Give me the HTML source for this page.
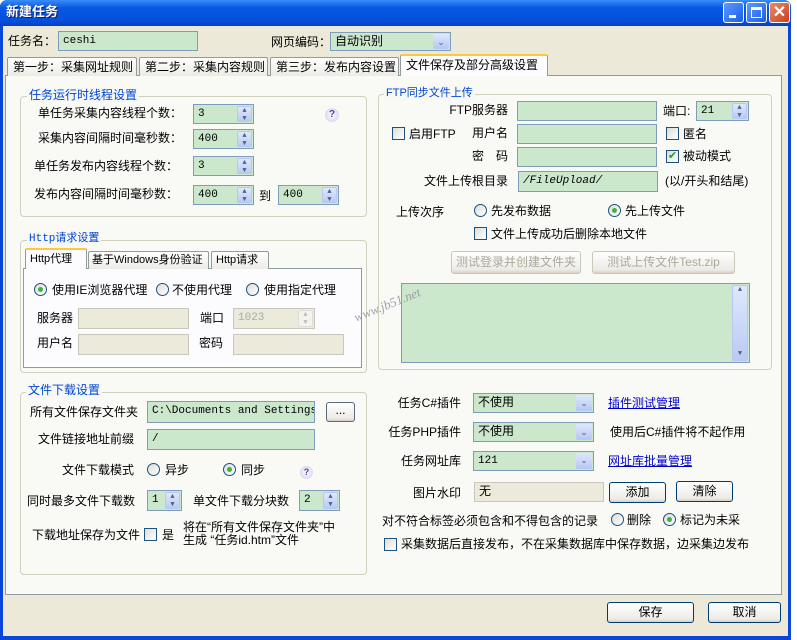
<!DOCTYPE html>
<html><head><meta charset="utf-8"><style>
*{box-sizing:border-box;margin:0;padding:0}
body{width:797px;height:627px;overflow:hidden;background:#fff;font-family:"Liberation Sans","Noto Sans CJK SC",sans-serif;font-size:12px;color:#000;position:relative}
.a{position:absolute;white-space:nowrap;line-height:14px}
.win{position:absolute;left:0;top:0;width:791px;height:640px;background:#0a46d8;border-radius:7px 7px 0 0}
.title{position:absolute;left:0;top:0;width:791px;height:26px;background:linear-gradient(#3a8cf7,#0958e4 30%,#0450dc 80%,#0a3fc0);border-radius:7px 7px 0 0}
.client{position:absolute;left:3px;top:26px;width:785px;height:610px;background:#ece9d8}
.tb{position:absolute;top:2px;width:21px;height:21px;border:1px solid #fff;border-radius:3px;background:linear-gradient(135deg,#5c9aff,#1a5fe6)}
.in{position:absolute;background:#cce8cc;border:1px solid #7f9db9;font-family:"Liberation Mono","Noto Sans CJK SC",monospace;font-size:11px;padding:2px 4px;line-height:14px;white-space:nowrap;overflow:hidden}
.dis{background:#ebeadb;border-color:#c9c7ba;color:#aaa}
.spb{position:absolute;right:1px;top:1px;bottom:1px;width:15px;background:linear-gradient(#dfe7fd,#b9cbf3);border:1px solid #b8c8f0;border-radius:2px;font-size:7px;color:#4d6185;text-align:center;line-height:8px}
.cb{position:absolute;right:1px;top:1px;bottom:1px;width:16px;background:linear-gradient(#dfe7fd,#b4c6f3);border-radius:2px;color:#4d6185;font-size:9px;text-align:center;line-height:16px}
.grp{position:absolute;border:1px solid #d0d0bf;border-radius:4px}
.lg{position:absolute;background:#f7f7f3;color:#0046d5;padding:0 2px;line-height:14px;white-space:nowrap}
.panel{position:absolute;left:5px;top:75px;width:777px;height:520px;background:#f9f9f6;border:1px solid #919b9c}
.tab{position:absolute;top:57px;height:19px;border:1px solid #919b9c;border-bottom:none;background:linear-gradient(#fff,#ecebe5);padding:2px 5px;line-height:14px;white-space:nowrap;border-radius:2px 2px 0 0}
.act{top:54px;height:22px;background:#fcfcfe;border-top:2px solid #ffc83c}
.rd{position:absolute;width:13px;height:13px;border:1px solid #1c5180;border-radius:50%;background:linear-gradient(135deg,#dcdcd7,#fff)}
.rd.on::after{content:"";position:absolute;left:3px;top:3px;width:5px;height:5px;border-radius:50%;background:#3fb33f}
.ck{position:absolute;width:13px;height:13px;border:1px solid #1c5180;background:linear-gradient(135deg,#dcdcd7,#fff)}
.btn{position:absolute;border:1px solid #003c74;border-radius:3px;background:linear-gradient(#fff,#ecebe6 85%,#d6d0c5);text-align:center;line-height:18px}
.bd{border-color:#c9c7ba;color:#aca899}
.lnk{color:#00c;text-decoration:underline}
.r{text-align:right}
</style></head><body>
<div class="win"></div>
<div class="title"></div>
<div class="a" style="left:6px;top:5px;color:#fff;font-weight:bold;font-size:13px;text-shadow:1px 1px #0a1e6e">新建任务</div>
<div class="tb" style="left:723px"><div style="position:absolute;left:5px;top:12px;width:7px;height:3px;background:#fff"></div></div>
<div class="tb" style="left:746px"><div style="position:absolute;left:4px;top:4px;width:11px;height:11px;border:1px solid #fff;border-top:3px solid #fff"></div></div>
<div class="tb" style="left:769px;background:linear-gradient(135deg,#e88a6a,#c8421e);color:#fff;font-size:16px;text-align:center;line-height:19px;font-weight:bold">✕</div>
<div class="client"></div>

<div class="a" style="left:8px;top:34px">任务名：</div>
<div class="in" style="left:58px;top:31px;width:140px;height:20px">ceshi</div>
<div class="a" style="left:271px;top:35px">网页编码：</div>
<div class="in" style="left:330px;top:32px;width:121px;height:19px;font-family:'Liberation Sans','Noto Sans CJK SC';font-size:12px;padding-top:1px">自动识别<div class="cb">⌄</div></div>

<div class="panel"></div>
<div class="tab" style="left:7px;width:130px">第一步：采集网址规则</div>
<div class="tab" style="left:139px;width:129px">第二步：采集内容规则</div>
<div class="tab" style="left:270px;width:129px">第三步：发布内容设置</div>
<div class="tab act" style="left:400px;width:148px">文件保存及部分高级设置</div>

<!-- group 1 -->
<div class="grp" style="left:20px;top:96px;width:347px;height:121px"></div>
<div class="lg" style="left:27px;top:88px">任务运行时线程设置</div>
<div class="a r" style="left:20px;top:106px;width:162px">单任务采集内容线程个数：</div>
<div class="a r" style="left:20px;top:131px;width:162px">采集内容间隔时间毫秒数：</div>
<div class="a r" style="left:20px;top:159px;width:158px">单任务发布内容线程个数：</div>
<div class="a r" style="left:20px;top:187px;width:158px">发布内容间隔时间毫秒数：</div>
<div class="in" style="left:193px;top:104px;width:61px;height:20px">3<div class="spb">▲<br>▼</div></div>
<div class="in" style="left:193px;top:129px;width:61px;height:20px">400<div class="spb">▲<br>▼</div></div>
<div class="in" style="left:193px;top:156px;width:61px;height:20px">3<div class="spb">▲<br>▼</div></div>
<div class="in" style="left:193px;top:185px;width:61px;height:20px">400<div class="spb">▲<br>▼</div></div>
<div class="a" style="left:259px;top:189px">到</div>
<div class="in" style="left:278px;top:185px;width:61px;height:20px">400<div class="spb">▲<br>▼</div></div>
<div class="a" style="left:325px;top:108px;width:14px;height:14px;border-radius:50%;background:radial-gradient(#fff,#cfc9e8);color:#5a3fa0;font-size:10px;font-weight:bold;text-align:center">?</div>

<!-- http group -->
<div class="grp" style="left:20px;top:240px;width:347px;height:133px"></div>
<div class="lg" style="left:27px;top:232px;font-family:'Liberation Mono','Noto Sans CJK SC',monospace;font-size:11px">Http请求设置</div>
<div style="position:absolute;left:23px;top:268px;width:339px;height:100px;background:#fcfcfe;border:1px solid #919b9c"></div>
<div class="tab act" style="left:25px;top:248px;height:21px;width:62px;padding:2px 4px;font-size:11px">Http代理</div>
<div class="tab" style="left:88px;top:251px;height:18px;width:121px;padding:1px 3px;font-size:11px">基于Windows身份验证</div>
<div class="tab" style="left:211px;top:251px;height:18px;width:58px;padding:1px 4px;font-size:11px">Http请求</div>
<div class="rd on" style="left:34px;top:283px"></div><div class="a" style="left:52px;top:283px">使用IE浏览器代理</div>
<div class="rd" style="left:156px;top:283px"></div><div class="a" style="left:172px;top:283px">不使用代理</div>
<div class="rd" style="left:246px;top:283px"></div><div class="a" style="left:264px;top:283px">使用指定代理</div>
<div class="a" style="left:37px;top:311px">服务器</div>
<div class="in dis" style="left:78px;top:308px;width:111px;height:21px"></div>
<div class="a" style="left:200px;top:311px">端口</div>
<div class="in dis" style="left:233px;top:308px;width:82px;height:21px">1023<div class="spb" style="background:#f4f3ee;border-color:#ddd;color:#bbb">▲<br>▼</div></div>
<div class="a" style="left:37px;top:336px">用户名</div>
<div class="in dis" style="left:78px;top:334px;width:111px;height:21px"></div>
<div class="a" style="left:199px;top:336px">密码</div>
<div class="in dis" style="left:233px;top:334px;width:111px;height:21px"></div>

<!-- file download -->
<div class="grp" style="left:20px;top:392px;width:347px;height:183px"></div>
<div class="lg" style="left:26px;top:383px">文件下载设置</div>
<div class="a" style="left:30px;top:405px">所有文件保存文件夹</div>
<div class="in" style="left:147px;top:401px;width:168px;height:22px">C:\Documents and Settings\A</div>
<div class="btn" style="left:326px;top:402px;width:29px;height:20px;border-color:#5a6b7e;line-height:14px">...</div>
<div class="a" style="left:38px;top:432px">文件链接地址前缀</div>
<div class="in" style="left:147px;top:429px;width:168px;height:21px">/</div>
<div class="a" style="left:62px;top:463px">文件下载模式</div>
<div class="rd" style="left:147px;top:463px"></div><div class="a" style="left:165px;top:463px">异步</div>
<div class="rd on" style="left:223px;top:463px"></div><div class="a" style="left:241px;top:463px">同步</div>
<div class="a" style="left:300px;top:466px;width:13px;height:13px;border-radius:50%;background:radial-gradient(#fff,#cfc9e8);color:#5a3fa0;font-size:9px;font-weight:bold;text-align:center;line-height:13px">?</div>
<div class="a" style="left:27px;top:494px">同时最多文件下载数</div>
<div class="in" style="left:147px;top:490px;width:35px;height:21px">1<div class="spb">▲<br>▼</div></div>
<div class="a" style="left:193px;top:494px">单文件下载分块数</div>
<div class="in" style="left:299px;top:490px;width:41px;height:21px">2<div class="spb">▲<br>▼</div></div>
<div class="a" style="left:32px;top:528px">下载地址保存为文件</div>
<div class="ck" style="left:144px;top:528px"></div><div class="a" style="left:162px;top:528px">是</div>
<div class="a" style="left:183px;top:521px;line-height:13px">将在“所有文件保存文件夹”中<br>生成 “任务id.htm”文件</div>

<!-- FTP -->
<div class="grp" style="left:378px;top:94px;width:394px;height:276px"></div>
<div class="lg" style="left:384px;top:86px;font-size:11px">FTP同步文件上传</div>
<div class="a r" style="left:400px;top:103px;width:108px">FTP服务器</div>
<div class="a r" style="left:400px;top:126px;width:108px">用户名</div>
<div class="a r" style="left:400px;top:149px;width:108px">密　码</div>
<div class="a r" style="left:400px;top:174px;width:108px">文件上传根目录</div>
<div class="in" style="left:517px;top:101px;width:140px;height:20px"></div>
<div class="in" style="left:517px;top:124px;width:140px;height:20px"></div>
<div class="in" style="left:517px;top:147px;width:140px;height:20px"></div>
<div class="in" style="left:518px;top:171px;width:140px;height:21px;font-style:italic">/FileUpload/</div>
<div class="ck" style="left:392px;top:127px"></div><div class="a" style="left:409px;top:127px">启用FTP</div>
<div class="a" style="left:663px;top:104px">端口:</div>
<div class="in" style="left:696px;top:101px;width:53px;height:20px">21<div class="spb">▲<br>▼</div></div>
<div class="ck" style="left:666px;top:127px"></div><div class="a" style="left:683px;top:127px">匿名</div>
<div class="ck" style="left:666px;top:150px;color:#21a121;font-size:11px;line-height:11px;text-align:center">✔</div><div class="a" style="left:683px;top:149px">被动模式</div>
<div class="a" style="left:665px;top:174px">(以/开头和结尾)</div>
<div class="a" style="left:396px;top:205px">上传次序</div>
<div class="rd" style="left:474px;top:204px"></div><div class="a" style="left:491px;top:204px">先发布数据</div>
<div class="rd on" style="left:608px;top:204px"></div><div class="a" style="left:625px;top:204px">先上传文件</div>
<div class="ck" style="left:474px;top:227px"></div><div class="a" style="left:491px;top:227px">文件上传成功后删除本地文件</div>
<div class="btn bd" style="left:451px;top:251px;width:130px;height:23px;line-height:20px">测试登录并创建文件夹</div>
<div class="btn bd" style="left:592px;top:251px;width:143px;height:23px;line-height:20px">测试上传文件Test.zip</div>
<div class="in" style="left:401px;top:283px;width:349px;height:80px"><div class="spb" style="width:16px">▲<br><br><br><br><br><br><br><br>▼</div></div>
<div class="a" style="left:352px;top:298px;color:#8a8a9a;font-style:italic;font-size:13px;transform:rotate(-22deg);opacity:.8;font-family:'Liberation Serif',serif">www.jb51.net</div>

<!-- right lower -->
<div class="a r" style="left:380px;top:396px;width:81px">任务C#插件</div>
<div class="in" style="left:473px;top:393px;width:121px;height:20px;font-family:'Liberation Sans','Noto Sans CJK SC';font-size:12px;padding-top:1px">不使用<div class="cb">⌄</div></div>
<div class="a lnk" style="left:608px;top:396px">插件测试管理</div>
<div class="a r" style="left:380px;top:425px;width:81px">任务PHP插件</div>
<div class="in" style="left:473px;top:422px;width:121px;height:20px;font-family:'Liberation Sans','Noto Sans CJK SC';font-size:12px;padding-top:1px">不使用<div class="cb">⌄</div></div>
<div class="a" style="left:610px;top:425px">使用后C#插件将不起作用</div>
<div class="a r" style="left:380px;top:454px;width:81px">任务网址库</div>
<div class="in" style="left:473px;top:451px;width:121px;height:20px">121<div class="cb">⌄</div></div>
<div class="a lnk" style="left:608px;top:454px">网址库批量管理</div>
<div class="a r" style="left:380px;top:486px;width:81px">图片水印</div>
<div class="in dis" style="left:474px;top:482px;width:130px;height:20px;color:#000;font-family:'Liberation Sans','Noto Sans CJK SC';font-size:12px;padding-top:1px">无</div>
<div class="btn" style="left:609px;top:482px;width:57px;height:21px">添加</div>
<div class="btn" style="left:676px;top:481px;width:57px;height:21px">清除</div>
<div class="a" style="left:382px;top:514px">对不符合标签必须包含和不得包含的记录</div>
<div class="rd" style="left:611px;top:513px"></div><div class="a" style="left:627px;top:513px">删除</div>
<div class="rd on" style="left:663px;top:513px"></div><div class="a" style="left:680px;top:513px">标记为未采</div>
<div class="ck" style="left:384px;top:538px"></div><div class="a" style="left:401px;top:537px">采集数据后直接发布，不在采集数据库中保存数据，边采集边发布</div>

<div class="btn" style="left:607px;top:602px;width:87px;height:21px">保存</div>
<div class="btn" style="left:708px;top:602px;width:73px;height:21px">取消</div>
</body></html>
